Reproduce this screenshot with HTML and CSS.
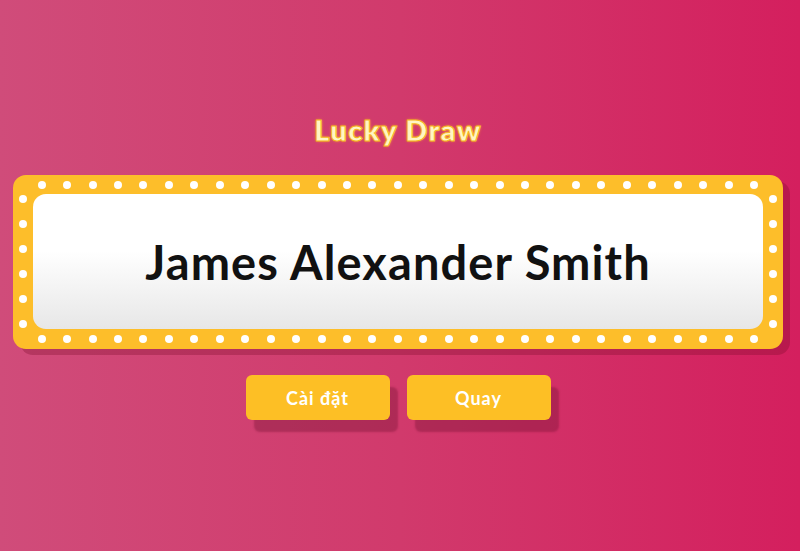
FILE: index.html
```html
<!DOCTYPE html>
<html lang="vi">
<head>
<meta charset="utf-8">
<title>Lucky Draw</title>
<link rel="stylesheet" href="styles.css">
</head>
<body>
<main class="page">
  <h1 class="title">Lucky Draw</h1>
  <section class="marquee">
    <div class="dots-row" id="top"></div>
    <div class="dots-col" id="left"></div>
    <div class="screen"><span class="name">James Alexander Smith</span></div>
    <div class="dots-col" id="right"></div>
    <div class="dots-row" id="bottom"></div>
  </section>
  <div class="actions">
    <button class="btn">Cài đặt</button>
    <button class="btn">Quay</button>
  </div>
</main>
<script src="script.js"></script>
</body>
</html>
```
FILE: script.js
```js
function fill(id, n) {
  var el = document.getElementById(id);
  for (var i = 0; i < n; i++) {
    var d = document.createElement('span');
    d.className = 'dot';
    el.appendChild(d);
  }
}
fill('top', 29);
fill('bottom', 29);
fill('left', 6);
fill('right', 6);
```
FILE: styles.css
```css
html, body {
  margin: 0;
  padding: 0;
}
body {
  width: 800px;
  height: 551px;
  overflow: hidden;
  background: linear-gradient(to right, #d04c7a 0%, #d13a6c 50%, #d41f5e 100%);
  font-family: Lato, "Noto Sans", sans-serif;
}
.page {
  padding-top: 112px;
  display: flex;
  flex-direction: column;
  align-items: center;
  width: 796px;
}
.title {
  margin: 0;
  font-size: 29px;
  line-height: 36px;
  font-weight: 800;
  color: #fff6c4;
  -webkit-text-stroke: 1px #f6b81c;
  text-shadow: 0 0 3px rgba(255, 190, 40, 0.9);
  letter-spacing: 1.3px;
}
.marquee {
  margin-top: 27px;
  width: 770px;
  height: 174px;
  box-sizing: border-box;
  background: #fdbe2a;
  border-radius: 13px;
  box-shadow: 7px 6px 0 rgba(120, 10, 40, 0.3);
  display: grid;
  grid-template-columns: 20px 1fr 20px;
  grid-template-rows: 19px 135px 20px;
}
.dots-row {
  grid-column: 1 / 4;
  display: flex;
  justify-content: space-between;
  align-items: center;
  padding: 0 24.7px;
}
.dots-col {
  display: flex;
  flex-direction: column;
  justify-content: space-between;
  align-items: center;
  padding: 0.5px 0;
}
.dot {
  width: 8px;
  height: 8px;
  border-radius: 50%;
  background: #fff;
  display: block;
}
.screen {
  border-radius: 13px;
  background: linear-gradient(to bottom, #ffffff 0%, #ffffff 42%, #e7e7e7 100%);
  display: flex;
  align-items: center;
  justify-content: center;
}
.name {
  font-size: 47px;
  font-weight: 700;
  color: #111;
  letter-spacing: 1.1px;
}
.actions {
  margin-top: 26px;
  display: flex;
  gap: 17px;
}
.btn {
  width: 144px;
  height: 45px;
  border: none;
  border-radius: 6px;
  background: #fdbf25;
  color: #fff;
  font-family: Lato, "Noto Sans", sans-serif;
  font-size: 18px;
  font-weight: 700;
  letter-spacing: 1px;
  box-shadow: 8px 12px 2px rgba(110, 15, 45, 0.35);
  padding: 0;
}
```
